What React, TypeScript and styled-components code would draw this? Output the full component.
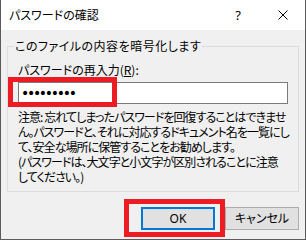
import React from "react";
import styled, { createGlobalStyle } from "styled-components";

const Global = createGlobalStyle`
  html, body { margin: 0; padding: 0; background: #f0f0f0; }
  body { width: 306px; height: 240px; overflow: hidden; }
  *, *::before, *::after { box-sizing: border-box; }
`;

const jp = `"Noto Sans CJK JP", "Noto Sans", sans-serif`;

const Window = styled.div`
  width: 306px;
  height: 240px;
  display: flex;
  flex-direction: column;
  background: #f0f0f0;
  border: 1px solid #5b5b5b;
  border-top: none;
  font-family: ${jp};
  font-size: 12px;
  font-feature-settings: "palt";
  color: #000;
`;

const TitleBar = styled.div`
  height: 30px;
  flex: none;
  background: #fff;
  display: flex;
  align-items: center;
`;

const Title = styled.div`
  flex: 1;
  padding-left: 8px;
  line-height: 16px;
  white-space: nowrap;
`;

const CaptionButton = styled.div<{ $w: number }>`
  width: ${(p) => p.$w}px;
  height: 30px;
  display: flex;
  align-items: center;
  justify-content: center;
  font-family: "Noto Sans", sans-serif;
  font-size: 13px;
  color: #000;
`;

const Body = styled.div`
  flex: 1;
  display: flex;
  flex-direction: column;
  padding: 8px 6px 0 6px;
`;

const Group = styled.fieldset`
  margin: 0;
  min-width: 0;
  border: 1px solid #dcdcdc;
  padding: 8px 10px 7px 10px;
  display: flex;
  flex-direction: column;
`;

const Legend = styled.legend`
  margin-left: -4px;
  padding: 0 1px;
  line-height: 16px;
  letter-spacing: 0.5px;
  white-space: nowrap;
`;

const Label = styled.div`
  line-height: 16px;
  white-space: nowrap;
`;

const FieldWrap = styled.div`
  position: relative;
  margin-top: 4px;
`;

const PasswordInput = styled.input`
  display: block;
  width: 100%;
  height: 22px;
  margin: 0;
  padding: 0 2px;
  border: 1px solid #7a7a7a;
  background: #fff;
  outline: none;
  font-family: "DejaVu Sans", sans-serif;
  font-size: 14px;
  letter-spacing: -2.3px;
  color: #000;
`;

const Highlight = styled.div<{ $l: number; $t: number; $w: number; $h: number }>`
  position: absolute;
  left: ${(p) => p.$l}px;
  top: ${(p) => p.$t}px;
  width: ${(p) => p.$w}px;
  height: ${(p) => p.$h}px;
  border: 5px solid #ed1c24;
  pointer-events: none;
`;

const Note = styled.div`
  margin-top: 5px;
  line-height: 15px;
  letter-spacing: -0.95px;
`;

const NoteLine = styled.div`
  white-space: nowrap;
`;

const ButtonRow = styled.div`
  margin-top: 15px;
  display: flex;
  justify-content: flex-end;
  gap: 10px;
`;

const ButtonWrap = styled.div`
  position: relative;
`;

const Button = styled.button<{ $default?: boolean }>`
  width: 74px;
  height: 23px;
  margin: 0;
  padding: 0;
  background: #e1e1e1;
  border: ${(p) => (p.$default ? "2px solid #0078d7" : "1px solid #adadad")};
  font-family: "Noto Sans", "Noto Sans CJK JP", sans-serif;
  font-size: 12px;
  font-feature-settings: "palt";
  color: #000;
  line-height: 16px;
`;

const CloseIcon = () => (
  <svg width="10" height="10" viewBox="0 0 10 10">
    <path d="M0.5 0.5 L9.5 9.5 M9.5 0.5 L0.5 9.5" stroke="#000" strokeWidth="1" fill="none" />
  </svg>
);

export default function App() {
  return (
    <>
      <Global />
      <Window>
        <TitleBar>
          <Title>パスワードの確認</Title>
          <CaptionButton $w={46}>?</CaptionButton>
          <CaptionButton $w={44}>
            <CloseIcon />
          </CaptionButton>
        </TitleBar>
        <Body>
          <Group>
            <Legend>このファイルの内容を暗号化します</Legend>
            <Label>
              パスワードの再入力(<u>R</u>):
            </Label>
            <FieldWrap>
              <PasswordInput type="password" defaultValue="123456789" readOnly />
              <Highlight $l={-10} $t={-5} $w={109} $h={30} />
            </FieldWrap>
            <Note>
              <NoteLine>注意: 忘れてしまったパスワードを回復することはできませ</NoteLine>
              <NoteLine>ん。パスワードと、それに対応するドキュメント名を一覧にし</NoteLine>
              <NoteLine>て、安全な場所に保管することをお勧めします。</NoteLine>
              <NoteLine>(パスワードは、大文字と小文字が区別されることに注意</NoteLine>
              <NoteLine>してください。)</NoteLine>
            </Note>
          </Group>
          <ButtonRow>
            <ButtonWrap>
              <Button $default>OK</Button>
              <Highlight $l={-17} $t={-8} $w={101} $h={38} />
            </ButtonWrap>
            <Button>キャンセル</Button>
          </ButtonRow>
        </Body>
      </Window>
    </>
  );
}
